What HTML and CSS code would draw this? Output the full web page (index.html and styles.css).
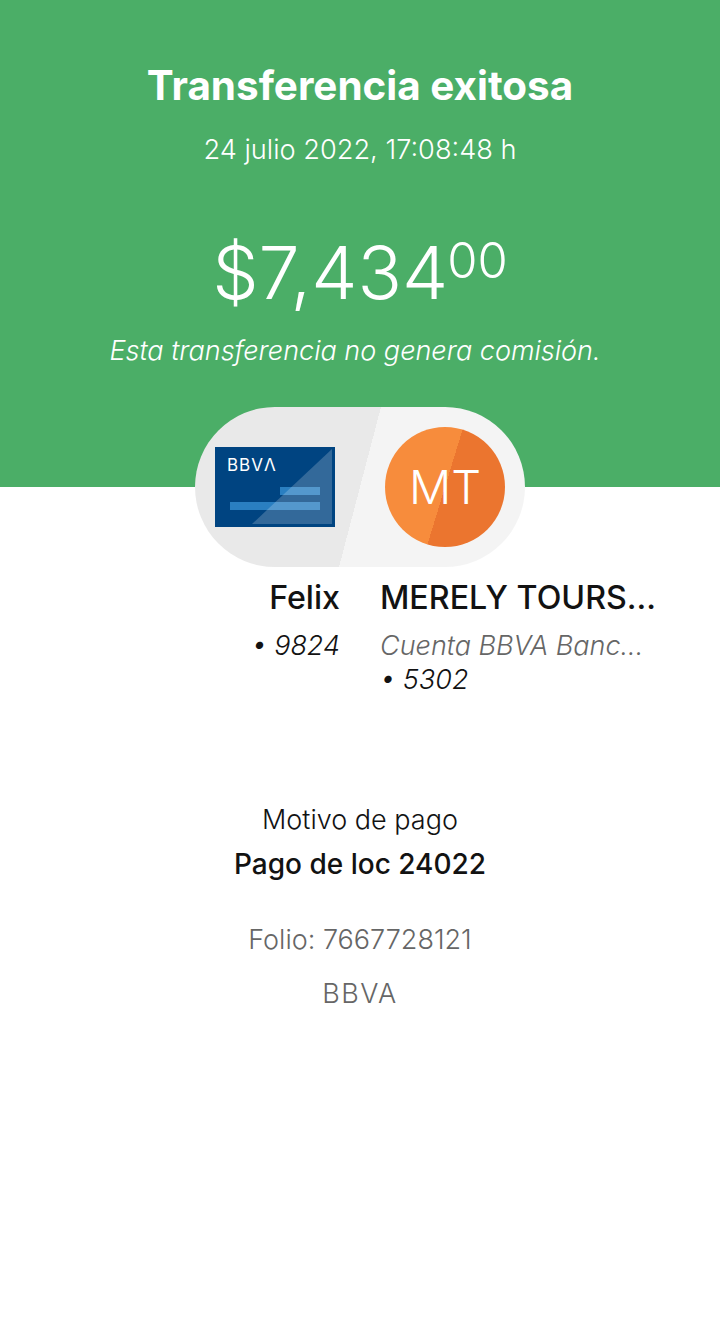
FILE: index.html
```html
<!DOCTYPE html>
<html lang="es">
<head>
  <meta charset="UTF-8">
  <title>Transferencia exitosa</title>
  <link rel="stylesheet" href="styles.css">
</head>
<body>

  <header class="resumen">
    <h1 class="titulo">Transferencia exitosa</h1>
    <p class="fecha">24 julio 2022, 17:08:48 h</p>
    <p class="monto">$7,434<sup class="centavos">00</sup></p>
    <p class="comision">Esta transferencia no genera comisión.</p>
  </header>

  <main>
    <div class="pastilla">
      <svg class="tarjeta" width="120" height="80" viewBox="0 0 120 80">
        <rect width="120" height="80" fill="#004481"/>
        <rect x="65" y="40" width="40" height="8" fill="#2a7fc1"/>
        <rect x="15" y="55" width="90" height="8" fill="#2a7fc1"/>
        <polygon points="117,2 117,77 37,77" fill="#fff" fill-opacity="0.2"/>
        <text x="12" y="24" class="tarjeta-logo">BBVΛ</text>
      </svg>
      <div class="avatar">MT</div>
    </div>

    <div class="cuentas">
      <div class="cuenta origen">
        <h2 class="nombre">Felix</h2>
        <p class="detalle">• 9824</p>
      </div>
      <div class="cuenta destino">
        <h2 class="nombre">MERELY TOURS...</h2>
        <p class="detalle banco">Cuenta BBVA Banc...</p>
        <p class="detalle">• 5302</p>
      </div>
    </div>

    <section class="motivo">
      <p class="motivo-label">Motivo de pago</p>
      <p class="motivo-valor">Pago de loc 24022</p>
      <p class="folio">Folio: 7667728121</p>
      <p class="folio folio-banco">BBVA</p>
    </section>
  </main>

</body>
</html>
```

FILE: styles.css
```css
body {
  font-family: Inter, Arial, sans-serif;
  font-weight: 300;
  margin: 0;
  padding: 0;
  background: white;
  color: #121212;
}
p, h1, h2 {
  margin: 0;
}
.resumen {
  height: 487px;
  box-sizing: border-box;
  padding-top: 60px;
  background-color: #4bae67;
  color: white;
  text-align: center;
}
.titulo {
  font-size: 40.4px;
  line-height: 52px;
  font-weight: 700;
}
.fecha {
  margin-top: 18px;
  font-size: 27.2px;
  line-height: 40px;
}
.monto {
  margin-top: 53px;
  font-size: 73.5px;
  line-height: 100px;
}
.centavos {
  margin-left: -1px;
  font-size: 49px;
  line-height: 0;
  vertical-align: 21px;
}
.comision {
  margin-top: 8px;
  padding-right: 10px;
  font-size: 27px;
  line-height: 40px;
  font-style: italic;
}
.pastilla {
  display: flex;
  align-items: center;
  gap: 50px;
  box-sizing: border-box;
  width: 330px;
  height: 160px;
  margin: -80px auto 0;
  padding-left: 20px;
  border-radius: 80px;
  background: linear-gradient(104.7deg, #e9e9e9 50%, #f4f4f4 50%);
}
.tarjeta {
  display: block;
}
.tarjeta-logo {
  font-family: Inter, Arial, sans-serif;
  font-size: 17px;
  font-weight: 400;
  letter-spacing: 1px;
  fill: white;
}
.avatar {
  width: 120px;
  height: 120px;
  border-radius: 50%;
  background: linear-gradient(107deg, #f78c3c 50%, #eb752f 50%);
  color: white;
  font-size: 47px;
  line-height: 120px;
  text-align: center;
}
.cuentas {
  display: grid;
  grid-template-columns: 340px 280px;
  column-gap: 40px;
  margin-top: 10px;
}
.origen {
  text-align: right;
}
.nombre {
  font-size: 32.2px;
  line-height: 42px;
  font-weight: 450;
}
.detalle {
  font-size: 27px;
  line-height: 34px;
  font-style: italic;
}
.nombre + .detalle {
  margin-top: 10px;
}
.banco {
  color: #666;
}
.motivo {
  margin-top: 103px;
  text-align: center;
}
.motivo-label {
  font-size: 27px;
  line-height: 40px;
}
.motivo-valor {
  margin-top: 4px;
  font-size: 28px;
  line-height: 40px;
  font-weight: 450;
}
.folio {
  margin-top: 14px;
  font-size: 27px;
  line-height: 40px;
  color: #666;
}
.motivo-valor + .folio {
  margin-top: 36px;
}
.folio-banco {
  letter-spacing: 1.5px;
}
```
